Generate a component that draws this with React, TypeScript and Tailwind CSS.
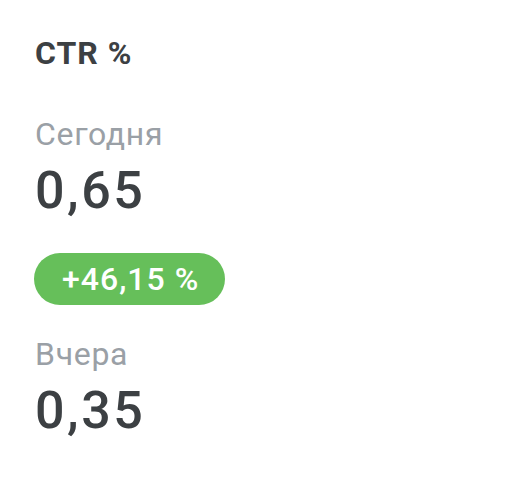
export default function App() {
  return (
    <div className="w-[512px] h-[480px] bg-white pl-[35px] pt-[33px] font-['Roboto',sans-serif]">
      <h1 className="text-[32px] leading-[40px] font-bold tracking-[1px] text-[#3c4043]">CTR %</h1>

      <p className="mt-[41px] text-[32px] leading-[40px] tracking-[0.7px] text-[#9aa0a6]">Сегодня</p>
      <p className="mt-[7px] text-[52px] leading-[60px] font-medium tracking-[2.5px] text-[#3c4043]">0,65</p>

      <div className="-ml-[1px] mt-[32px] inline-flex h-[52px] items-center rounded-full bg-[#66bf5a] pl-[28px] pr-[26px] text-[32px] font-medium tracking-[1px] text-white">
        +46,15 %
      </div>

      <p className="mt-[29px] text-[32px] leading-[40px] tracking-[0.7px] text-[#9aa0a6]">Вчера</p>
      <p className="mt-[7px] text-[52px] leading-[60px] font-medium tracking-[2.5px] text-[#3c4043]">0,35</p>
    </div>
  )
}
